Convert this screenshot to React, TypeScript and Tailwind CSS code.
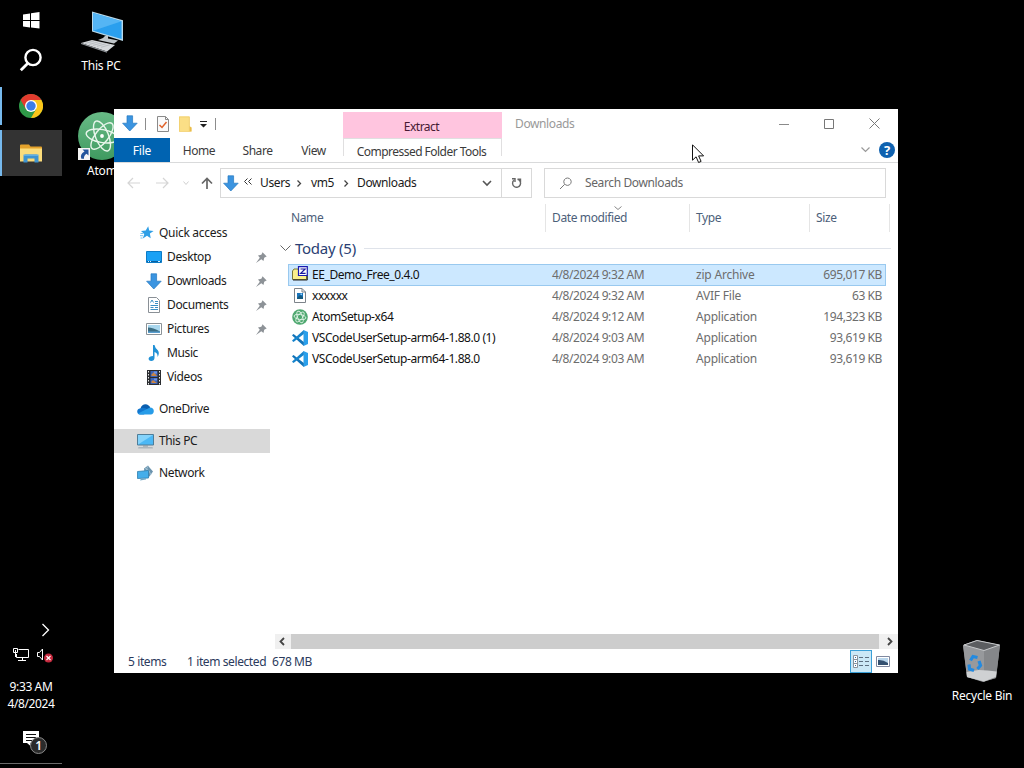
import type { ReactNode } from 'react';
import clsx from 'clsx';

// ============================================================
// Icons
// ============================================================

interface IconProps {
    className?: string;
}

function DownArrowIcon({ className }: IconProps) {
    return (
        <svg className={className} width="16" height="17" viewBox="0 0 16 17">
            <path d="M5 .8h5.6v7.4h4.6L7.8 16 .6 8.2H5z" fill="#3b94e0" stroke="#2578c0" strokeWidth=".7" />
        </svg>
    );
}

function WindowsIcon() {
    return (
        <svg width="17" height="17" viewBox="0 0 17 17" fill="#fff">
            <path d="M0 2.5 7 1.5V8H0zM8 1.3 16.5 0v8H8zM0 9h7v6.5l-7-1zM8 9h8.5v7.500L8 15.500z" />
        </svg>
    );
}

function TaskSearchIcon() {
    return (
        <svg width="24" height="24" viewBox="0 0 24 24" fill="none" stroke="#fff">
            <circle cx="14" cy="9.5" r="7.6" strokeWidth="2.4" />
            <path d="m8.6 15.4-6.8 6.8" strokeWidth="2.8" />
        </svg>
    );
}

function ChromeIcon() {
    return (
        <svg width="24" height="24" viewBox="0 0 24 24">
            <circle cx="12" cy="12" r="12" fill="#2f9a48" />
            <path d="M1.6 6A12 12 0 0 1 22.4 6L12 6.5 6.8 15z" fill="#e23b2e" />
            <path d="M22.4 6A12 12 0 0 1 12 24l5.2-9L12 6.5V6z" fill="#fbc61a" />
            <circle cx="12" cy="12" r="6" fill="#fff" />
            <circle cx="12" cy="12" r="4.7" fill="#3b7de8" />
        </svg>
    );
}

function ExplorerIcon() {
    return (
        <svg width="22" height="19" viewBox="0 0 22 19">
            <path d="M0 1.5Q0 .5 1 .5h8l1.5 2H21q1 0 1 1V17H0z" fill="#e3a12b" />
            <path d="M0 4.5h22v13H0z" fill="#fbdc7b" />
            <path d="M3.5 18.5v-6q0-2 2-2h11q2 0 2 2v6h-4v-4h-7v4z" fill="#3f94d0" />
            <path d="M3.5 12h15v-1.5h-15z" fill="#62b0e4" />
        </svg>
    );
}

function ThisPcLargeIcon() {
    return (
        <svg width="44" height="42" viewBox="0 0 44 42">
            <path d="m12 .5 31 8.8V30L12 20.5z" fill="#b9d8e9" />
            <path d="m13.2 2 28.4 8.2v17.9l-28.4-8.4z" fill="#2a9fee" />
            <path d="m13.2 2 28.4 8.2-28.4 9.5z" fill="#55b5f4" />
            <path d="m25 25 3-.6v3l10 2-4 3-16-3.5 5-2z" fill="#bfc5c9" />
            <path d="m1 32 11-3 23 5-8 6.500z" fill="#d5d8db" />
            <path d="m5 32.500 9-2.500m-5 3.500 9-2.600m-5 3.500 9-2.600m-5 3.500 9-2.600m-5 3.600 9-2.600" stroke="#a6abb0" strokeWidth=".6" />
            <path d="m1 32 26 8.500v1.200L1 33z" fill="#8e9398" />
        </svg>
    );
}

function AtomLargeIcon() {
    return (
        <svg width="48" height="48" viewBox="0 0 48 48">
            <defs>
                <linearGradient id="atomLarge" x1="0" y1="0" x2="0" y2="1">
                    <stop offset="0" stopColor="#68ba86" />
                    <stop offset="1" stopColor="#3f9a60" />
                </linearGradient>
            </defs>
            <circle cx="24" cy="24" r="24" fill="url(#atomLarge)" />
            <g fill="none" stroke="#e9f6ec" strokeWidth="1.4">
                <ellipse cx="24" cy="24" rx="6.500" ry="16" transform="rotate(-22 24 24)" />
                <ellipse cx="24" cy="24" rx="6.500" ry="16" transform="rotate(38 24 24)" />
                <ellipse cx="24" cy="24" rx="6.500" ry="16" transform="rotate(-80 24 24)" />
            </g>
            <circle cx="24" cy="24" r="1.900" fill="#fff" />
        </svg>
    );
}

function ShortcutIcon() {
    return (
        <svg width="12" height="12" viewBox="0 0 12 12">
            <path d="M0 0h12v12H0z" fill="#f4f4f4" />
            <path d="M4.500 1.500H10.500V7.500L8.500 5.700Q5.600 7.500 6 10.800H3.400Q1.500 6.500 6.500 3.600z" fill="#23549c" />
        </svg>
    );
}

function RecycleBinIcon() {
    return (
        <svg width="40" height="44" viewBox="0 0 40 44">
            <path d="M1 6 15 1l23 5-4 33-13 4-16-5z" fill="#8b8d90" />
            <path d="M1 6 22 12v30.500L5 38z" fill="#97999c" />
            <path d="M22 12 38 6l-4 33-12 3.500z" fill="#85878a" />
            <path d="M2 6 15 1.500 37.500 6 22 11.500z" fill="#5b5d60" stroke="#c7c9cb" strokeWidth="1" />
            <path d="m4.600 33 12-2 9 .5 9 1-.8 5.500L22 42.500 5 38z" fill="#cfd1d3" />
            <g fill="none" stroke="#238ae0" strokeWidth="3.200">
                <path d="m8.500 21.500 2.500-4 4.500 1" />
                <path d="m17 22 1.500 4.500-3 3.500" />
                <path d="m12 31.500-4.500-1.500-.5-4.500" />
            </g>
        </svg>
    );
}

function TrayNetworkIcon() {
    return (
        <svg width="17" height="14" viewBox="0 0 17 14" fill="none" stroke="#fff">
            <path d="M5.500 1.500h10v8h-12V6M9.500 9.500v3M5 12.500h8" />
            <path d="M.5.500h4v4h-4zM2.500 2v7" />
        </svg>
    );
}

function TrayVolumeIcon() {
    return (
        <svg width="18" height="16" viewBox="0 0 18 16">
            <path d="M1.500 5.500h2l3-3.500v11l-3-3.500h-2z" fill="none" stroke="#fff" />
            <circle cx="12.500" cy="11" r="4.500" fill="#c5283d" />
            <path d="m10.500 9 4 4m0-4-4 4" stroke="#fff" strokeWidth="1.100" />
        </svg>
    );
}

function NotificationIcon() {
    return (
        <svg width="25" height="25" viewBox="0 0 25 25">
            <path d="M0 1h16v12H7.500V16L4 13H0z" fill="#fff" />
            <path d="M3 4.500h10M3 7.500h10M3 10.500h6" stroke="#111" />
        </svg>
    );
}

function PropertiesIcon() {
    return (
        <svg width="12" height="16" viewBox="0 0 12 16">
            <path d="M.5.500h8l3 3v12H.5z" fill="#fafafa" stroke="#8a8a8a" />
            <path d="M8.500.500v3h3" fill="none" stroke="#8a8a8a" />
            <path d="m2.500 9 2.500 2.500L9.500 6" fill="none" stroke="#e0622a" strokeWidth="1.500" />
        </svg>
    );
}

function NewFolderIcon() {
    return (
        <svg width="13" height="16" viewBox="0 0 13 16">
            <path d="M0 .5h10.500V10l2 1.500v4H0z" fill="#fbdf86" />
            <path d="M10.500 10.500v5h2v-4z" fill="#e9bb4b" />
            <path d="M.4.900h10v14.700H.4z" fill="none" stroke="#f0cd6a" strokeWidth=".8" />
        </svg>
    );
}

function QuickAccessIcon() {
    return (
        <svg width="14" height="14" viewBox="0 0 14 14">
            <path d="m8.200.300 1 4.200 4.400.400-3.700 2.700.8 4.700-3.700-2.500-4.200 2.700 1.500-4.600L1 4.900l4.700-.3z" fill="#2f9fe6" />
            <path d="M.5 7.500h3M0 9.700h3M.5 12h2" stroke="#76c3f0" />
        </svg>
    );
}

function DesktopIcon() {
    return (
        <svg width="16" height="12" viewBox="0 0 16 12">
            <path d="M.5.500h15v11H.5z" fill="#1aa1f5" stroke="#0c7bc6" />
            <path d="M1 10.500h14" stroke="#0a5f9e" />
            <path d="M2 10.500h1m1 0h1m7 0h2" stroke="#d8efff" />
        </svg>
    );
}

function DocumentIcon() {
    return (
        <svg width="12" height="16" viewBox="0 0 12 16">
            <path d="M.5.500h8l3 3v12H.5z" fill="#fff" stroke="#8a9096" />
            <path d="M2.500 5.500 4 3l1.500 2.500M7 4.500h3M7 6.500h3M2.500 8.500H10M2.500 10.500h3M7 10.500h3M2.500 12.500H10" fill="none" stroke="#3a8fc4" />
        </svg>
    );
}

function PicturesIcon() {
    return (
        <svg width="16" height="12" viewBox="0 0 16 12">
            <path d="M.5.500h15v11H.5z" fill="#fff" stroke="#8b9297" />
            <path d="M2 2h12v8H2z" fill="#a9d7ee" />
            <path d="M2 4.500q5 0 12 4V10H2z" fill="#3c6d82" />
            <path d="M2 8.500h12V10H2z" fill="#5a9fd0" />
        </svg>
    );
}

function MusicIcon() {
    return (
        <svg width="12" height="16" viewBox="0 0 12 16">
            <path d="M5 0h1.500Q7 3 9.800 5.200 12 8 9.500 12q.5-4-3-5v6Q6.300 15.800 3.200 16 .5 15.800.6 13.600 1 11 5 11z" fill="#2191d6" />
        </svg>
    );
}

function VideosIcon() {
    return (
        <svg width="14" height="15" viewBox="0 0 14 15">
            <path d="M0 0h14v15H0z" fill="#2a2c30" />
            <path d="M1.500 1v14M12.500 1v14" stroke="#e9e9e9" strokeDasharray="1.500 1.500" />
            <path d="M3.500 1h7v6h-7zM3.500 8h7v6h-7z" fill="#3a63b8" />
            <path d="M4 5l3-3 3 4H5zM4 12l2-2 4 3H5z" fill="#c98445" />
            <path d="M7 1.500h3v2H7zM7 8.500h3v2H7z" fill="#6a92e8" />
        </svg>
    );
}

function OneDriveIcon() {
    return (
        <svg width="17" height="11" viewBox="0 0 17 11">
            <path d="M3.500 4.200Q5 .2 8.500.200q3.300 0 4.700 3.500L8 9z" fill="#0a5fb0" />
            <path d="M3.400 4.200Q.3 4.700.2 7.500.4 10.300 3 10.500h4L11 5.500Q7 3 3.400 4.200z" fill="#1277cf" />
            <path d="M3 10.600Q1.700 10.400 1 9.600L10 5l3-1.400q3.600.2 3.800 3.500-.2 3.300-3 3.500z" fill="#279ce8" />
        </svg>
    );
}

function ThisPcIcon() {
    return (
        <svg width="17" height="15" viewBox="0 0 17 15">
            <path d="M.5.500h16v10.500H.5z" fill="#4cb8f5" stroke="#4f7d98" />
            <path d="M1 1h15L1 10.500z" fill="#84d3fb" />
            <path d="M6 11.500h5v1H6z" fill="#84949e" />
            <path d="M1.500 13h14l.5 1.500H1z" fill="#aeb6bb" />
        </svg>
    );
}

function NetworkIcon() {
    return (
        <svg width="17" height="16" viewBox="0 0 17 16">
            <path d="M7 3.500 11 .5l1.500 2 3.500 4-3.500 5H8z" fill="#6b93ad" />
            <path d="M8 3q5 2 6 7M11 1.200q-3 4-2 8" fill="none" stroke="#a7c8da" strokeWidth=".8" />
            <path d="M.5 6.500 11.500 5.500v7.500L.5 13.500z" fill="#45aeea" stroke="#2f7fae" strokeWidth=".8" />
            <path d="M3 15.500 9 14.500V13l-5 .5z" fill="#73a9c6" />
        </svg>
    );
}

function PinIcon() {
    return (
        <svg width="11" height="11" viewBox="0 0 11 11">
            <path d="M6.500.300 10.700 4.400 9.500 5 8.200 5.700 7.500 9 5.300 7.200 0 11 3.800 5.700 2 3.500l3.300-.7.700-1.300z" fill="#8d9297" />
        </svg>
    );
}

function ZipIcon() {
    return (
        <svg className="mb-[3px] shrink-0" width="16" height="15" viewBox="0 0 16 15">
            <path d="M.5 5 2 3h4l1 2h7.500v8.500H.5z" fill="#fbf08c" stroke="#7a7838" />
            <path d="M1 14h14.300V9.500" fill="none" stroke="#222" />
            <path d="M6.500.700h8.800v8.800H6.500z" fill="#fff" stroke="#1a1ab0" strokeWidth="1.200" />
            <path d="M8.500 3h4.600L8.700 7.300h4.900" fill="none" stroke="#1a1a9c" strokeWidth="1.200" />
        </svg>
    );
}

function AvifIcon() {
    return (
        <svg width="12" height="15" viewBox="0 0 12 15">
            <path d="M.5.500h7.500l3.500 3.500v10.500H.5z" fill="#fff" stroke="#7d838a" />
            <path d="M8 .5V4h3.500" fill="none" stroke="#7d838a" />
            <path d="M3 5h6v6H3z" fill="#1b75bb" />
            <path d="m3 10 3-3 3 2v2H3z" fill="#155a80" />
            <path d="M6.500 5.500H8V7H6.500z" fill="#8fd0ff" />
        </svg>
    );
}

function AtomIcon() {
    return (
        <svg width="16" height="16" viewBox="0 0 16 16">
            <circle cx="8" cy="8" r="7.800" fill="#4fa870" />
            <g fill="none" stroke="#dff2e5" strokeWidth=".9">
                <ellipse cx="8" cy="8" rx="2.500" ry="6" transform="rotate(-22 8 8)" />
                <ellipse cx="8" cy="8" rx="2.500" ry="6" transform="rotate(38 8 8)" />
                <ellipse cx="8" cy="8" rx="2.500" ry="6" transform="rotate(-80 8 8)" />
            </g>
        </svg>
    );
}

function VsCodeIcon() {
    return (
        <svg width="16" height="16" viewBox="0 0 16 16">
            <path d="M11.500 0 16 2v12l-4.500 2z" fill="#2a9fea" />
            <path d="M0 5.300 1.500 4 11.800 12v4L1.200 6.500z" fill="#1173b8" />
            <path d="M0 10.700 1.500 12 11.800 4V0L1.200 9.500z" fill="#1583cc" />
        </svg>
    );
}

interface StrokeProps {
    d: string;
    width: number;
    height: number;
    color?: string;
    strokeWidth?: number;
}

function Stroke({ d, width, height, color = '#555', strokeWidth = 1 }: StrokeProps) {
    return (
        <svg width={width} height={height} viewBox={`0 0 ${width} ${height}`} fill="none" stroke={color} strokeWidth={strokeWidth}>
            <path d={d} />
        </svg>
    );
}

// ============================================================
// Data
// ============================================================

interface NavItem {
    label: string;
    icon: ReactNode;
    pinned?: boolean;
}

const quickItems: NavItem[] = [
    { label: 'Desktop', icon: <DesktopIcon />, pinned: true },
    { label: 'Downloads', icon: <DownArrowIcon />, pinned: true },
    { label: 'Documents', icon: <DocumentIcon />, pinned: true },
    { label: 'Pictures', icon: <PicturesIcon />, pinned: true },
    { label: 'Music', icon: <MusicIcon /> },
    { label: 'Videos', icon: <VideosIcon /> },
];

interface FileItem {
    name: string;
    icon: ReactNode;
    date: string;
    type: string;
    size: string;
    selected?: boolean;
}

const files: FileItem[] = [
    { name: 'EE_Demo_Free_0.4.0', icon: <ZipIcon />, date: '4/8/2024 9:32 AM', type: 'zip Archive', size: '695,017 KB', selected: true },
    { name: 'xxxxxx', icon: <AvifIcon />, date: '4/8/2024 9:32 AM', type: 'AVIF File', size: '63 KB' },
    { name: 'AtomSetup-x64', icon: <AtomIcon />, date: '4/8/2024 9:12 AM', type: 'Application', size: '194,323 KB' },
    { name: 'VSCodeUserSetup-arm64-1.88.0 (1)', icon: <VsCodeIcon />, date: '4/8/2024 9:03 AM', type: 'Application', size: '93,619 KB' },
    { name: 'VSCodeUserSetup-arm64-1.88.0', icon: <VsCodeIcon />, date: '4/8/2024 9:03 AM', type: 'Application', size: '93,619 KB' },
];

// ============================================================
// Taskbar
// ============================================================

function Taskbar() {
    return (
        <div className="flex h-[764px] w-[62px] flex-col border-b border-[#6a6a6a] text-white">
            <div className="flex h-10 items-center justify-center">
                <WindowsIcon />
            </div>
            <div className="flex h-10 items-center justify-center">
                <TaskSearchIcon />
            </div>
            <div className="mt-[7px] flex h-[38px] items-center justify-center border-l-2 border-[#76b9ed] pr-0.5">
                <ChromeIcon />
            </div>
            <div className="mt-[5px] flex h-[46px] items-center justify-center border-l-2 border-[#76b9ed] bg-[#333] pr-0.5">
                <ExplorerIcon />
            </div>
            <div className="mt-auto flex justify-end pr-3">
                <Stroke d="m1.500 1 6 6-6 6" width={9} height={14} color="#fff" strokeWidth={1.3} />
            </div>
            <div className="mt-2.5 flex h-4 items-center gap-[6px] pl-[13px]">
                <TrayNetworkIcon />
                <TrayVolumeIcon />
            </div>
            <div className="mt-[15px] text-center leading-[17px]">
                <p>9:33 AM</p>
                <p>4/8/2024</p>
            </div>
            <div className="relative mt-[18px] mb-[8px] h-[25px] pl-[23px]">
                <NotificationIcon />
                <span className="absolute top-[7px] left-[30px] flex size-[17px] items-center justify-center rounded-full border border-[#8a8a8a] bg-[#2b2b2b] text-[12px] font-semibold">
                    1
                </span>
            </div>
        </div>
    );
}

// ============================================================
// Explorer window
// ============================================================

function Ribbon() {
    return (
        <div className="flex h-[54px] shrink-0 border-b border-[#d9dadb]">
            <div className="flex w-[229px] flex-col">
                <div className="flex h-[30px] items-center pl-2">
                    <DownArrowIcon />
                    <div className="ml-[7px] h-3 w-px bg-[#8c8c8c]" />
                    <div className="ml-[11px]">
                        <PropertiesIcon />
                    </div>
                    <div className="ml-2.5">
                        <NewFolderIcon />
                    </div>
                    <svg className="mt-0.5 ml-2" width="7" height="7" viewBox="0 0 7 7">
                        <path d="M0 0h7v1H0zM0 3h7L3.500 6.500z" fill="#222" />
                    </svg>
                    <div className="ml-2 h-3 w-px bg-[#8c8c8c]" />
                </div>
                <div className="flex h-6 text-center leading-[26px] tracking-[-.45px] text-[#3b3b3b]">
                    <div className="w-14 bg-[#0063b1] tracking-[-.2px] text-white">File</div>
                    <div className="w-[58px]">Home</div>
                    <div className="w-[59px]">Share</div>
                    <div className="w-[53px]">View</div>
                </div>
            </div>
            <div className="flex w-[159px] flex-col pt-[3px] text-center">
                <div className="h-[26px] bg-[#ffc5df] pr-0.5 leading-[29px] tracking-[-.5px] text-[#471a33]">Extract</div>
                <div className="h-[18px] border-x border-t border-[#e0dfe0] pr-0.5 leading-[25px] tracking-[-.53px] whitespace-nowrap text-[#3b3b3b]">
                    Compressed Folder Tools
                </div>
            </div>
            <div className="flex flex-1 flex-col">
                <div className="flex h-[29px] items-center">
                    <span className="flex-1 pl-[13px] text-[#999]">Downloads</span>
                    <div className="flex items-center gap-[35px] pr-[18px]">
                        <Stroke d="M0 5.500h10" width={10} height={10} color="#8a8a8a" />
                        <Stroke d="M.5.500h9v9h-9z" width={10} height={10} color="#777" />
                        <Stroke d="m.5.500 10 10m0-10-10 10" width={11} height={11} color="#777" />
                    </div>
                </div>
                <div className="flex h-6 items-center justify-end gap-[9px] pr-[3px]">
                    <Stroke d="m.5.500 4 4 4-4" width={9} height={6} color="#999" strokeWidth={1.2} />
                    <span className="flex size-4 items-center justify-center rounded-full bg-[#0f62b0] text-[13px] font-bold text-white">?</span>
                </div>
            </div>
        </div>
    );
}

function AddressBar() {
    return (
        <div className="flex h-[35px] shrink-0 items-end">
            <div className="flex h-[30px] w-[106px] items-center pl-[13px]">
                <Stroke d="M13 6H1m5-5L1 6l5 5" width={13} height={12} color="#d5d5d5" strokeWidth={1.2} />
                <span className="w-[16px]" />
                <Stroke d="M0 6h12M7 1l5 5-5 5" width={13} height={12} color="#d5d5d5" strokeWidth={1.2} />
                <span className="w-[14px]" />
                <Stroke d="m.5.500 2.500 3 2.500-3" width={6} height={5} color="#d0d0d0" />
                <span className="w-[12px]" />
                <Stroke d="M6 12V1.500M1 6.500l5-5 5 5" width={12} height={12} color="#666" strokeWidth={1.7} />
            </div>
            <div className="flex h-[30px] w-[312px] items-center border border-[#d9d9d9] text-[#1a1a1a]">
                <DownArrowIcon className="ml-[2px]" />
                <div className="mb-[3px] ml-[5px]">
                    <Stroke d="m3.500.500-3 3 3 3M7.500.500l-3 3 3 3" width={8} height={7} color="#333" />
                </div>
                <span className="ml-[8px] w-[37px]">Users</span>
                <Stroke d="m.5.500 3 3-3 3" width={5} height={7} color="#444" strokeWidth={1.3} />
                <span className="ml-[9px] w-[33px]">vm5</span>
                <Stroke d="m.5.500 3 3-3 3" width={5} height={7} color="#444" strokeWidth={1.3} />
                <span className="ml-[8px] flex-1">Downloads</span>
                <Stroke d="m1 1 4 4 4-4" width={10} height={7} color="#555" strokeWidth={1.6} />
                <div className="ml-[9px] flex h-full w-[30px] items-center justify-center border-l border-[#d9d9d9]">
                    <Stroke d="M2.800 3.300A4 4 0 1 0 6.500 2.300M1 1.700h3v3.300M6.500 2.300h3v3" width={11} height={12} color="#666" strokeWidth={1.4} />
                </div>
            </div>
            <div className="ml-3 flex h-[30px] w-[342px] items-center border border-[#d9d9d9] pl-[14px] text-[#666]">
                <Stroke d="M8.500 1a3.700 3.700 0 1 1-.01 0M5.700 7.300 1 12" width={13} height={13} color="#777" />
                <span className="ml-[13px]">Search Downloads</span>
            </div>
        </div>
    );
}

function RootNavItem({ label, icon, active }: { label: string; icon: ReactNode; active?: boolean }) {
    return (
        <div className={clsx('flex h-6 w-[156px] items-center pl-[23px]', active && 'bg-[#d9d9d9]')}>
            <span className="flex w-[22px]">{icon}</span>
            {label}
        </div>
    );
}

function Sidebar() {
    return (
        <div className="flex w-[161px] shrink-0 flex-col pt-[23px] text-[#1b1b1b]">
            <div className="flex h-6 items-center pl-[26px] tracking-[-.3px]">
                <span className="w-[19px]">
                    <QuickAccessIcon />
                </span>
                Quick access
            </div>
            {quickItems.map((item) => (
                <div key={item.label} className="flex h-6 items-center pr-2 pl-8">
                    <span className="mr-[5px] flex w-4 justify-center">{item.icon}</span>
                    <span className="flex-1">{item.label}</span>
                    {item.pinned && <PinIcon />}
                </div>
            ))}
            <div className="mt-2 flex flex-col gap-2">
                <RootNavItem label="OneDrive" icon={<OneDriveIcon />} />
                <RootNavItem label="This PC" icon={<ThisPcIcon />} active />
                <RootNavItem label="Network" icon={<NetworkIcon />} />
            </div>
        </div>
    );
}

function FileList() {
    return (
        <div className="flex flex-1 flex-col">
            <div className="mt-[6px] flex h-7 pl-[16px] text-[#4c607a]">
                <div className="w-[255px] border-r border-[#e5e5e5] leading-7">Name</div>
                <div className="relative w-36 border-r border-[#e5e5e5] pl-[6px] leading-7">
                    Date modified
                    <span className="absolute top-[2px] left-[68px]">
                        <Stroke d="m.5.500 3.500 3 3.500-3" width={8} height={5} color="#888" />
                    </span>
                </div>
                <div className="w-[120px] border-r border-[#e5e5e5] pl-[6px] leading-7">Type</div>
                <div className="w-20 border-r border-[#e5e5e5] pl-[6px] leading-7">Size</div>
            </div>
            <div className="mt-[4px] flex h-6 items-center pr-[7px] pl-[5px]">
                <Stroke d="m.5.500 5 5 5-5" width={11} height={7} color="#666" />
                <span className="ml-[4px] text-[15px] tracking-[-.25px] text-[#2b3f73]">Today (5)</span>
                <div className="mt-px ml-2 h-px flex-1 bg-[#dfe3ea]" />
            </div>
            <div className="mt-[4px] flex flex-col pl-[13px]">
                {files.map((file) => (
                    <div
                        key={file.name}
                        className={clsx(
                            'flex w-[598px] items-center border pl-[3px] tracking-[-.4px] text-[#6d6d6d]',
                            file.selected ? '-mb-px h-[22px] border-[#99c9ef] bg-[#cce8ff]' : 'h-[21px] border-transparent',
                        )}
                    >
                        <span className="flex w-4 justify-center">{file.icon}</span>
                        <span className="ml-1 w-60 tracking-[-.43px] whitespace-nowrap text-[#111]">{file.name}</span>
                        <span className="w-36 whitespace-nowrap">{file.date}</span>
                        <span className="w-[90px] tracking-[-.2px]">{file.type}</span>
                        <span className="flex-1 pr-[3px] text-right">{file.size}</span>
                    </div>
                ))}
            </div>
            <div className="mt-auto flex h-[15px] items-center bg-[#f0f0f0]">
                <div className="flex w-4 justify-center pr-0.5">
                    <Stroke d="M5 1 1.500 4.500 5 8" width={7} height={9} color="#444" strokeWidth={1.8} />
                </div>
                <div className="h-full flex-1 bg-[#cdcdcd]" />
                <div className="flex w-[19px] justify-center pl-0.5">
                    <Stroke d="M2 1l3.500 3.500L2 8" width={7} height={9} color="#444" strokeWidth={1.8} />
                </div>
            </div>
        </div>
    );
}

function StatusBar() {
    return (
        <div className="flex h-6 shrink-0 items-center pl-[14px] leading-6 tracking-[-.4px] text-[#2b3a5c]">
            <span className="w-[59px] pt-px">5 items</span>
            <span className="w-[85px] pt-px whitespace-nowrap">1 item selected</span>
            <span className="flex-1 pt-px">678 MB</span>
            <div className="flex h-[23px] w-[22px] items-center justify-center border border-[#3aa0d8] bg-[#cbe8f6]">
                <svg width="17" height="13" viewBox="0 0 17 13" fill="none">
                    <path d="M.5.500h4v12h-4zM.5 4.500h4M.5 8.500h4" fill="#fff" stroke="#8a939c" />
                    <path d="M2 2.500h1M2 6.500h1M2 10.500h1" stroke="#2b6ea8" />
                    <path d="M6 2.500h4m2 0h4M6 6.500h4m2 0h4M6 10.500h4m2 0h4" stroke="#5d6f80" />
                </svg>
            </div>
            <div className="flex w-[26px] justify-center pr-1">
                <svg width="14" height="11" viewBox="0 0 14 11">
                    <path d="M.5.500h13v10H.5z" fill="#fff" stroke="#8089a0" />
                    <path d="M2 2h10v7H2z" fill="#b9d6ec" />
                    <path d="M2 4q5-.5 10 3v2H2z" fill="#34506f" />
                </svg>
            </div>
        </div>
    );
}

function ExplorerWindow() {
    return (
        <div className="absolute top-[109px] left-[114px] flex h-[564px] w-[784px] flex-col bg-white">
            <Ribbon />
            <AddressBar />
            <div className="flex flex-1">
                <Sidebar />
                <FileList />
            </div>
            <StatusBar />
        </div>
    );
}

// ============================================================
// Desktop
// ============================================================

export default function App() {
    return (
        <div className="relative h-[768px] w-[1024px] overflow-hidden bg-black font-['Noto_Sans','Open_Sans',sans-serif] text-[12px] leading-4 tracking-[-.38px]">
            <Taskbar />

            <div className="absolute top-[11px] left-[71px] flex w-[60px] flex-col items-center text-white">
                <div className="pl-px">
                    <ThisPcLargeIcon />
                </div>
                <span className="mt-[5px] tracking-[-.2px]">This PC</span>
            </div>
            <div className="absolute top-[112px] left-[78px] flex w-12 flex-col text-white">
                <AtomLargeIcon />
                <span className="absolute top-[36px] left-0">
                    <ShortcutIcon />
                </span>
                <span className="mt-[3px] pl-[9px] tracking-[-.2px]">Atom</span>
            </div>
            <div className="absolute top-[639px] left-[947px] flex w-[70px] flex-col items-center text-white">
                <RecycleBinIcon />
                <span className="mt-[5px] tracking-[-.25px] whitespace-nowrap">Recycle Bin</span>
            </div>

            <ExplorerWindow />

            <svg className="absolute top-[144px] left-[692px]" width="13" height="20" viewBox="0 0 13 20">
                <path d="M.5.800v15.400l3.600-3.400 2.500 5.700 2.500-1.100-2.500-5.500h5z" fill="#fff" stroke="#111" />
            </svg>
        </div>
    );
}
